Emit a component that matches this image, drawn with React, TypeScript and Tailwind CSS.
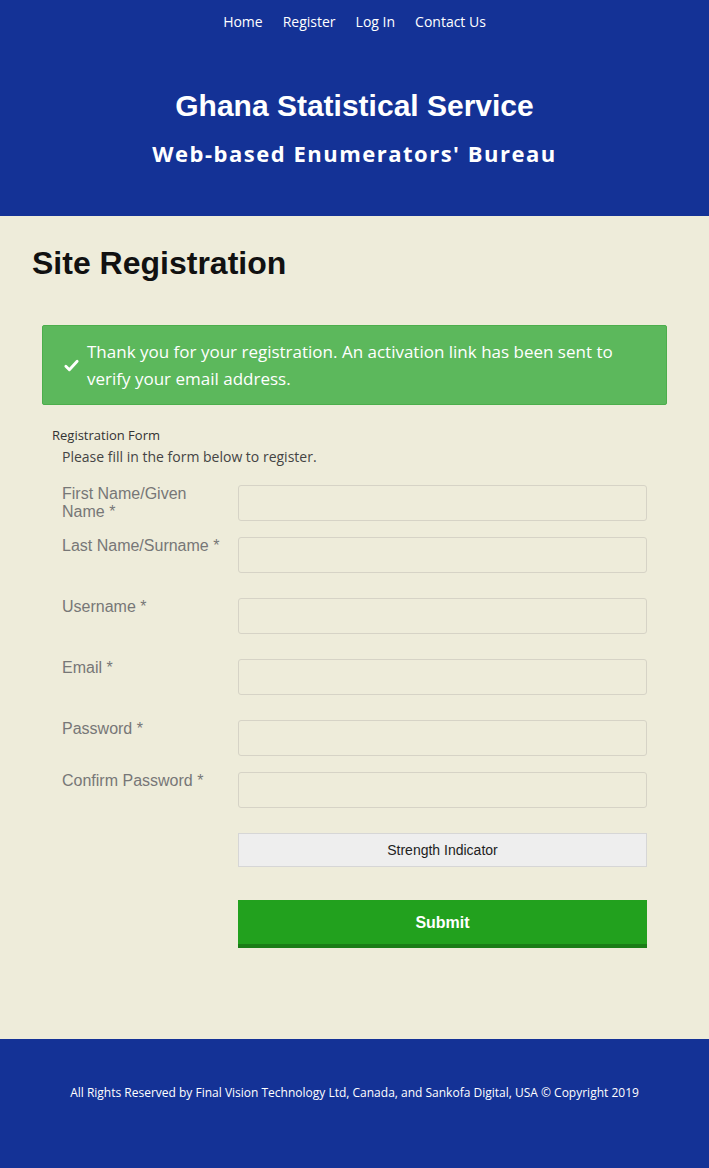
import React from 'react';

const fields = [
  { label: 'First Name/Given Name *', type: 'text', gap: 'mt-0' },
  { label: 'Last Name/Surname *', type: 'text', gap: 'mt-[16px]' },
  { label: 'Username *', type: 'text', gap: 'mt-[25px]' },
  { label: 'Email *', type: 'email', gap: 'mt-[25px]' },
  { label: 'Password *', type: 'password', gap: 'mt-[25px]' },
  { label: 'Confirm Password *', type: 'password', gap: 'mt-[16px]' },
];

const navLinks = ['Home', 'Register', 'Log In', 'Contact Us'];

export default function App() {
  return (
    <div className="min-h-screen bg-[#eeecda] font-['Open_Sans',sans-serif]">
      {/* Header */}
      <header className="h-[216px] bg-[#143296] text-white">
        <nav className="flex justify-center gap-[20px] pt-[12px] text-[14px] leading-[20px]">
          {navLinks.map((link) => (
            <a key={link} href="#" className="text-white">
              {link}
            </a>
          ))}
        </nav>
        <h1 className="mt-[56px] text-center font-['Liberation_Sans',Arial,sans-serif] text-[30px] font-bold leading-[36px]">
          Ghana Statistical Service
        </h1>
        <h2 className="mt-[14px] text-center text-[22px] font-bold leading-[30px] tracking-[1.5px]">
          Web-based Enumerators' Bureau
        </h2>
      </header>

      {/* Main */}
      <main className="px-[32px] pb-[91px]">
        <h1 className="pt-[28px] font-['Liberation_Sans',Arial,sans-serif] text-[32px] font-bold leading-[38px] text-[#111]">
          Site Registration
        </h1>

        <div className="mx-[10px] mt-[43px] flex items-center rounded-[2px] border border-[#4cae4c] bg-[#5cb85c] px-[20px] py-[12px] text-white">
          <svg
            className="mr-[7px] h-[17px] w-[17px] shrink-0"
            viewBox="0 0 24 24"
            fill="none"
            stroke="currentColor"
            strokeWidth={4}
            strokeLinecap="round"
            strokeLinejoin="round"
          >
            <path d="M4 13l5 5L20 6" />
          </svg>
          <p className="text-[17px] leading-[27px]">
            Thank you for your registration. An activation link has been sent to verify your email address.
          </p>
        </div>

        <form className="mt-[21px] px-[20px]" onSubmit={(e) => e.preventDefault()}>
          <div className="text-[13px] leading-[18px] text-[#333]">Registration Form</div>
          <p className="mt-[3px] pl-[10px] text-[14px] leading-[20px] text-[#444]">
            Please fill in the form below to register.
          </p>

          <div className="mt-[18px] pl-[10px]">
            {fields.map((f) => (
              <div key={f.label} className={`flex ${f.gap}`}>
                <label className="w-[176px] shrink-0 pr-[8px] font-['Liberation_Sans',Arial,sans-serif] text-[16px] leading-[18px] text-[#777]">
                  {f.label === 'First Name/Given Name *' ? (
                    <>
                      First Name/Given
                      <br />
                      Name *
                    </>
                  ) : (
                    f.label
                  )}
                </label>
                <input
                  type={f.type}
                  className="h-[36px] w-[409px] rounded-[3px] border border-[#d6d3c6] bg-[#eeecda] px-[10px] text-[14px] outline-none"
                />
              </div>
            ))}

            <div className="mt-[25px] flex">
              <div className="w-[176px] shrink-0" />
              <div className="flex h-[34px] w-[409px] items-center justify-center border border-[#d6d6d6] bg-[#eeeeee] font-['Liberation_Sans',Arial,sans-serif] text-[14px] text-[#222]">
                Strength Indicator
              </div>
            </div>

            <div className="mt-[33px] flex">
              <div className="w-[176px] shrink-0" />
              <button
                type="submit"
                className="h-[48px] w-[409px] border-b-[4px] border-[#1b7d17] bg-[#22a11e] pt-[1px] font-['Liberation_Sans',Arial,sans-serif] text-[16px] font-bold text-white"
              >
                Submit
              </button>
            </div>
          </div>
        </form>
      </main>

      {/* Footer */}
      <footer className="flex h-[130px] items-center justify-center bg-[#143296]">
        <p className="-mt-[22px] text-[12px] leading-[16px] text-white">
          All Rights Reserved by Final Vision Technology Ltd, Canada, and Sankofa Digital, USA © Copyright 2019
        </p>
      </footer>
    </div>
  );
}
